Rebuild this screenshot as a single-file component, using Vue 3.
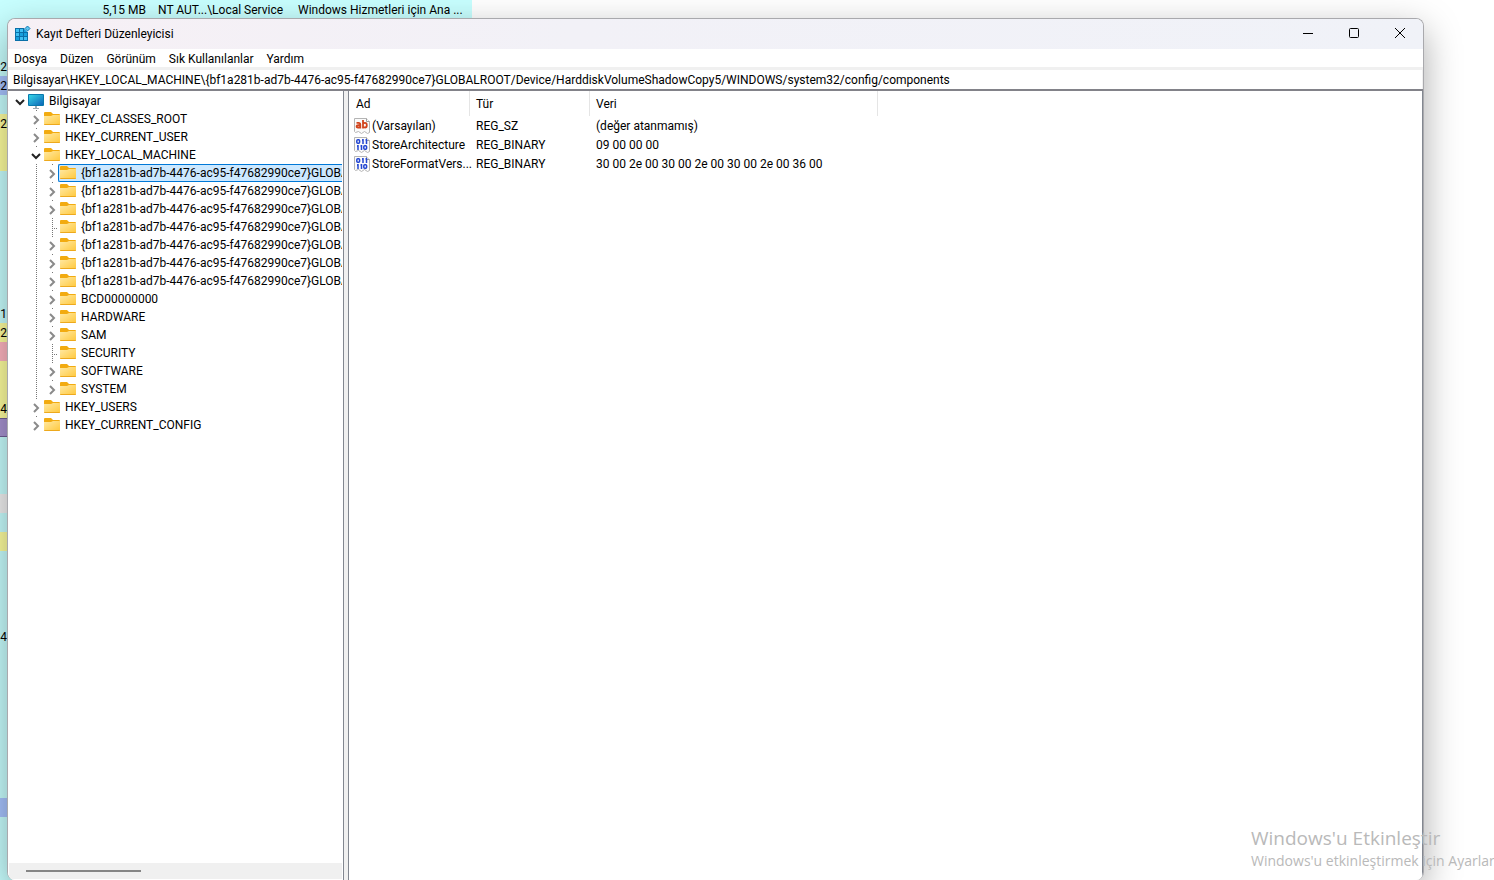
<script setup>
import { ref } from 'vue'

const tone = { b: 'blue', y: 'yellow', p: 'pink', v: 'violet', g: 'gray', c: '' }
const pattern = 'ccccbcyyyccccccccypyyyvcccgcycccccccccccccbcccc'
const digits = { 3: '2', 4: '2', 6: '2', 16: '1', 17: '2', 21: '4', 33: '4' }
const processes = pattern.split('').map((key, i) => ({ tone: tone[key], cpu: digits[i] || '' }))

const menus = ['Dosya', 'Düzen', 'Görünüm', 'Sık Kullanılanlar', 'Yardım']
const shadow = '{bf1a281b-ad7b-4476-ac95-f47682990ce7}GLOBAL'
const path = ref('Bilgisayar\\HKEY_LOCAL_MACHINE\\{bf1a281b-ad7b-4476-ac95-f47682990ce7}GLOBALROOT/Device/HarddiskVolumeShadowCopy5/WINDOWS/system32/config/components')

const nodes = [
  { level: 0, name: 'Bilgisayar', state: 'open', computer: true },
  { level: 1, name: 'HKEY_CLASSES_ROOT', state: 'closed' },
  { level: 1, name: 'HKEY_CURRENT_USER', state: 'closed' },
  { level: 1, name: 'HKEY_LOCAL_MACHINE', state: 'open' },
  { level: 2, name: shadow, state: 'closed', selected: true },
  { level: 2, name: shadow, state: 'closed' },
  { level: 2, name: shadow, state: 'closed' },
  { level: 2, name: shadow, state: 'leaf' },
  { level: 2, name: shadow, state: 'closed' },
  { level: 2, name: shadow, state: 'closed' },
  { level: 2, name: shadow, state: 'closed' },
  { level: 2, name: 'BCD00000000', state: 'closed' },
  { level: 2, name: 'HARDWARE', state: 'closed' },
  { level: 2, name: 'SAM', state: 'closed' },
  { level: 2, name: 'SECURITY', state: 'leaf' },
  { level: 2, name: 'SOFTWARE', state: 'closed' },
  { level: 2, name: 'SYSTEM', state: 'closed' },
  { level: 1, name: 'HKEY_USERS', state: 'closed' },
  { level: 1, name: 'HKEY_CURRENT_CONFIG', state: 'closed' },
]

const values = [
  { text: true, name: '(Varsayılan)', type: 'REG_SZ', data: '(değer atanmamış)' },
  { name: 'StoreArchitecture', type: 'REG_BINARY', data: '09 00 00 00' },
  { name: 'StoreFormatVers...', type: 'REG_BINARY', data: '30 00 2e 00 30 00 2e 00 30 00 2e 00 36 00' },
]
</script>

<template>
  <div class="desktop">
    <div class="processes">
      <div v-for="(p, i) in processes" :key="i" class="process" :class="p.tone">
        <template v-if="i === 0">
          <span class="memory">5,15 MB</span>
          <span class="user">NT AUT...\Local Service</span>
          <span>Windows Hizmetleri için Ana ...</span>
        </template>
        <span v-else class="cpu">{{ p.cpu }}</span>
      </div>
    </div>

    <main class="window">
      <header class="titlebar">
        <svg class="app-icon" width="16" height="16" viewBox="0 0 16 16">
          <path d="M0 2h13v13H0z" fill="#0a6fa8" />
          <path d="M1 3h3v3H1zM5 3h3v3H5zM1 7h3v3H1zM5 11h3v3H5zM9 11h3v3H9z" fill="#3fc0f2" />
          <path d="M5 7h3v3H5zM9 7h3v3H9zM1 11h3v3H1zM9 3h3v3H9z" fill="#179fdc" />
          <path d="M12.500-1L16 2.500 12.500 6 9 2.500z" fill="#f5f0f6" />
          <path d="M12.500 0L15 2.500 12.500 5 10 2.500z" fill="#5cc6ee" stroke="#1178b4" />
        </svg>
        <h1>Kayıt Defteri Düzenleyicisi</h1>
        <button class="caption" aria-label="Simge durumuna küçült">
          <svg width="12" height="12" viewBox="0 0 12 12"><path d="M1 5.500h10" /></svg>
        </button>
        <button class="caption" aria-label="Ekranı kapla">
          <svg width="12" height="12" viewBox="0 0 12 12"><rect x="1.500" y=".5" width="9" height="9" rx="1" /></svg>
        </button>
        <button class="caption" aria-label="Kapat">
          <svg width="12" height="12" viewBox="0 0 12 12"><path d="M1 0l10 10M11 0L1 10" /></svg>
        </button>
      </header>

      <nav class="menubar">
        <button v-for="m in menus" :key="m">{{ m }}</button>
      </nav>

      <div class="address">
        <input v-model="path" type="text" aria-label="Adres" spellcheck="false" />
      </div>

      <div class="panes">
        <section class="tree-pane">
          <ul class="tree">
            <li v-for="(n, i) in nodes" :key="i" :class="['node', 'level-' + n.level, n.state]">
              <button v-if="n.state !== 'leaf'" class="toggle" :aria-label="n.name">
                <svg v-if="n.state === 'open'" width="10" height="10" viewBox="0 0 10 10"><path d="M1 3l4 4 4-4" stroke="#222" /></svg>
                <svg v-else width="10" height="10" viewBox="0 0 10 10"><path d="M3 1l4 4-4 4" stroke="#8a8a8a" /></svg>
              </button>
              <span v-else class="toggle" />
              <span class="item" :class="{ selected: n.selected }">
                <svg v-if="n.computer" width="16" height="16" viewBox="0 0 16 16">
                  <defs>
                    <linearGradient id="screen" x1="0" y1="0" x2="1" y2="1">
                      <stop offset="0" stop-color="#35d5e6" /><stop offset="1" stop-color="#0d66b8" />
                    </linearGradient>
                  </defs>
                  <path d="M7 13h2v2h2v1H5v-1h2z" fill="#9aa9b3" />
                  <rect x="0" y="1" width="16" height="12" rx="1" fill="#087aad" />
                  <rect x="1" y="2" width="14" height="10" fill="url(#screen)" />
                </svg>
                <svg v-else width="16" height="16" viewBox="0 0 16 16">
                  <defs>
                    <linearGradient id="folder" x1="0" y1="0" x2="1" y2="1">
                      <stop offset="0" stop-color="#ffe9a3" /><stop offset="1" stop-color="#ffc83c" />
                    </linearGradient>
                  </defs>
                  <path d="M0 2q0-1 1-1h6l2 2h6q1 0 1 1v3H0z" fill="#f2ab10" />
                  <path d="M0 5h7l2-1h7v9q0 1-1 1H1q-1 0-1-1z" fill="url(#folder)" />
                  <path d="M0 13h16q0 1-1 1H1q-1 0-1-1z" fill="#eda91d" />
                </svg>
                <span class="name">{{ n.name }}</span>
              </span>
            </li>
          </ul>
          <div class="scrollbar"><div class="thumb" /></div>
        </section>

        <section class="list-pane">
          <table>
            <colgroup><col class="c-name" /><col class="c-type" /><col class="c-data" /><col /></colgroup>
            <thead>
              <tr><th>Ad</th><th>Tür</th><th>Veri</th><td></td></tr>
            </thead>
            <tbody>
              <tr v-for="v in values" :key="v.name">
                <td class="value-name">
                  <div>
                    <svg width="16" height="16" viewBox="0 0 16 16">
                      <path d="M.5.500h12l3 3v11l-2 1-3-2-3 2-3-2-3 1-1-1z" fill="#fbfbfb" stroke="#b4b4b4" />
                      <path d="M12.500.500v3h3" fill="#fff" stroke="#a0a0a0" />
                      <g v-if="v.text" fill="none" stroke="#d2451e" stroke-width="1.800">
                        <path d="M2.500 4.900h2q1.800 0 1.800 1.600v3.900M6 7.200H4.200q-1.600 0-1.600 1.200T4 9.500q1.500 0 2.300-.7" />
                        <path d="M9 2v8.400M9 5.600q.8-.7 2-.7 1.800 0 1.800 2.300T11 9.500q-1.200 0-2-.6" />
                      </g>
                      <g v-else fill="none" stroke="#2346d2" stroke-width="1.500">
                        <rect x="2.800" y="2.800" width="2.800" height="3.400" rx="1" />
                        <path d="M9 2v5M12.500 2v5M8 3h1M11.500 3h1M4 8v5M7.500 8v5M3 9h1M6.500 9h1" />
                        <rect x="9.800" y="8.800" width="2.800" height="3.400" rx="1" />
                      </g>
                    </svg>
                    <span>{{ v.name }}</span>
                  </div>
                </td>
                <td>{{ v.type }}</td>
                <td>{{ v.data }}</td>
                <td></td>
              </tr>
            </tbody>
          </table>
        </section>
      </div>
    </main>

    <aside class="activation">
      <p class="headline">Windows'u Etkinleştir</p>
      <p>Windows'u etkinleştirmek için Ayarlar</p>
    </aside>
  </div>
</template>

<style>
body {
  margin: 0;
  background: #fff;
}
</style>

<style scoped>
* {
  box-sizing: border-box;
}
.desktop {
  position: relative;
  display: flex;
  height: 100vh;
  padding: 18px 70px 0 7px;
  overflow: hidden;
  background: #fff;
  color: #000;
  font: 12px/18px Roboto, "Open Sans", sans-serif;
}
button {
  padding: 0;
  border: 0;
  background: none;
  color: inherit;
  font: inherit;
}

.processes {
  position: absolute;
  top: 0;
  left: 0;
  width: 472px;
}
.process {
  display: flex;
  height: 19px;
  line-height: 20px;
  background: #c8ffff;
  white-space: nowrap;
}
.process.blue { background: #a8c4ff; }
.process.yellow { background: #ffff9f; }
.process.pink { background: #ffb6c1; }
.process.violet {
  background: #a894d2;
  border: solid #6f5f96;
  border-width: 1px 0;
}
.process.gray { background: #f2f2f2; }
.memory {
  width: 146px;
  text-align: right;
}
.user {
  width: 152px;
  padding-left: 12px;
}
.cpu {
  width: 7px;
  text-align: right;
}

.window {
  position: relative;
  display: flex;
  flex-direction: column;
  flex: 1;
  min-width: 0;
  border: 1px solid #a9a9ad;
  border-bottom: 0;
  border-radius: 8px;
  background: #fff;
  box-shadow: 0 12px 36px rgba(0, 0, 0, 0.34);
  overflow: hidden;
}
.titlebar {
  display: flex;
  align-items: center;
  height: 30px;
  padding-left: 7px;
  background: linear-gradient(90deg, #f6f0f5, #f2f1f7 40%, #f0f2f8);
}
h1 {
  flex: 1;
  margin: 0 0 0 5px;
  font-size: 12px;
  font-weight: 400;
}
.caption {
  display: flex;
  align-items: center;
  justify-content: center;
  width: 46px;
  height: 30px;
}
.caption svg {
  fill: none;
  stroke: #000;
}
.menubar {
  display: flex;
  gap: 13px;
  height: 18px;
  padding: 1px 0 0 6px;
  line-height: 18px;
}
.address {
  padding: 3px 1px 0 0;
  background: #f0f0f0;
  border-bottom: 2px solid #828289;
}
.address input {
  display: block;
  width: 100%;
  height: 19px;
  padding: 0 5px;
  border: 0;
  background: #fff;
  color: #000;
  font: inherit;
  outline: 0;
}
.panes {
  display: flex;
  flex: 1;
  gap: 4px;
  min-height: 0;
  background: #f0f0f0;
}
.tree-pane {
  display: flex;
  flex-direction: column;
  width: 336px;
  padding: 1px 1px 0 1px;
  border-right: 1px solid #828790;
  background: #fff;
}
.tree {
  flex: 1;
  margin: 0;
  padding: 0;
  overflow: hidden;
  list-style: none;
}
.node {
  display: flex;
  height: 18px;
  padding-left: 2px;
  white-space: nowrap;
}
.level-1 { padding-left: 18px; }
.level-2 {
  padding-left: 34px;
  background: repeating-linear-gradient(#777 0 1px, transparent 1px 2px) 27px 0 / 1px 100% no-repeat;
}
.toggle {
  display: flex;
  flex: none;
  align-items: center;
  justify-content: center;
  width: 15px;
  height: 18px;
  padding: 2px 0 0 2px;
}
.level-1 .toggle,
.level-2 .toggle {
  background: linear-gradient(#777, #777) 9px 0 / 1px 1px no-repeat;
}
.leaf .toggle {
  background:
    repeating-linear-gradient(#777 0 1px, transparent 1px 2px) 9px 0 / 1px 100% no-repeat,
    repeating-linear-gradient(90deg, #777 0 1px, transparent 1px 2px) 9px 10px / 8px 1px no-repeat;
}
.toggle svg {
  fill: none;
  stroke-width: 2;
}
.item {
  display: flex;
  align-items: center;
  flex: 1;
  height: 18px;
  padding-left: 1px;
  border: 1px solid transparent;
  line-height: 16px;
}
.item.selected {
  border-color: #0078d7;
  border-right: 0;
  border-radius: 2px 0 0 2px;
  background: #cce8ff;
}
.item svg {
  flex: none;
}
.name {
  margin-left: 5px;
}
.scrollbar {
  height: 16px;
  margin-bottom: 1px;
  padding: 7px 0 0 17px;
  background: #f0f0f0;
}
.thumb {
  width: 115px;
  height: 2px;
  background: #868686;
}

.list-pane {
  flex: 1;
  min-width: 0;
  border: solid #828790;
  border-width: 0 1px;
  background: #fff;
}
table {
  width: 100%;
  table-layout: fixed;
  border-collapse: separate;
  border-spacing: 0;
}
.c-name { width: 121px; }
.c-type { width: 120px; }
.c-data { width: 288px; }
th {
  height: 25px;
  padding: 0 0 0 6px;
  border-right: 1px solid #e5e5e5;
  font-weight: 400;
  text-align: left;
}
th:first-child { padding-left: 7px; }
td {
  height: 19px;
  padding: 0 0 0 6px;
  white-space: nowrap;
}
td.value-name { padding-left: 5px; }
.value-name div {
  display: flex;
  align-items: center;
  gap: 2px;
}
.value-name svg { flex: none; }

.activation {
  position: absolute;
  right: 0;
  bottom: 9px;
  width: 243px;
  color: #b9b9b9;
  font: 14px/20px "Open Sans", sans-serif;
  white-space: nowrap;
  pointer-events: none;
}
.activation p { margin: 0; }
.activation .headline {
  font-size: 19px;
  line-height: 26px;
}
</style>
